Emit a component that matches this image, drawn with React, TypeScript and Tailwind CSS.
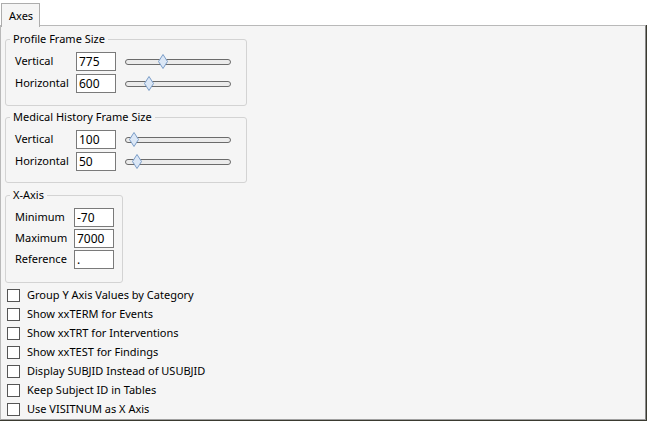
import React from "react";

const font = { fontFamily: '"Noto Sans", "Open Sans", Arial, sans-serif' };

function Slider({ pos }: { pos: number }) {
  return (
    <div className="relative w-[106px] h-[19px] flex items-center">
      <div className="w-full h-[6px] rounded-full border border-[#6b6b6b] bg-[#ebebeb]" />
      <svg
        className="absolute top-[2px]"
        style={{ left: pos - 5 }}
        width="10"
        height="15"
        viewBox="0 0 10 15"
      >
        <polygon points="5,0.5 9.5,7.5 5,14.5 0.5,7.5" fill="#dbe7f6" stroke="#7b9cc7" strokeWidth="1" />
      </svg>
    </div>
  );
}

function Input({ value }: { value: string }) {
  return (
    <div className="w-[40px] h-[19px] border border-[#7a7a7a] bg-white flex items-center pl-[2px] text-[12px] text-black leading-none">
      {value}
    </div>
  );
}

function SliderRow({ label, value, pos }: { label: string; value: string; pos: number }) {
  return (
    <div className="flex items-center h-[19px]">
      <div className="w-[61px] text-[11px] text-black">{label}</div>
      <Input value={value} />
      <div className="ml-[9px]">
        <Slider pos={pos} />
      </div>
    </div>
  );
}

function Group({ title, children, w, pb, gap }: { title: string; children: React.ReactNode; w: string; pb: string; gap: string }) {
  return (
    <fieldset className={`${w} border border-[#d3d3d3] rounded-[3px]`}>
      <legend className="ml-[4px] px-[3px] text-[11px] leading-[16px] text-black">{title}</legend>
      <div className={`pl-[9px] pt-[5px] ${pb} flex flex-col ${gap}`}>{children}</div>
    </fieldset>
  );
}

function Check({ label }: { label: string }) {
  return (
    <div className="flex items-center h-[19px]">
      <div className="w-[13px] h-[13px] border border-[#555] bg-white" />
      <span className="ml-[7px] text-[11px] text-black">{label}</span>
    </div>
  );
}

export default function App() {
  return (
    <div className="w-[647px] h-[422px] bg-white flex flex-col" style={font}>
      <div className="h-[26px] pt-[3px] pl-[1px] flex">
        <div className="relative z-10 w-[39px] h-[24px] border border-b-0 border-[#adadad] bg-[#f5f5f5] pl-[7px] pt-[4px] text-[11px] leading-[16px] text-black">
          Axes
        </div>
      </div>
      <div className="w-[647px] h-[396px] bg-[#3a3a30] -mt-px">
        <div className="w-[646px] h-[395px] bg-[#f5f5f5] border-t border-l border-[#b9b9b9] border-r border-r-[#8a8a8a] border-b border-b-[#a0a0a0] pl-[4px] pt-[5px] flex flex-col">
          <Group title="Profile Frame Size" w="w-[242px]" pb="pb-[12px]" gap="gap-[3px]">
            <SliderRow label="Vertical" value="775" pos={38} />
            <SliderRow label="Horizontal" value="600" pos={24} />
          </Group>
          <div className="h-[3px]" />
          <Group title="Medical History Frame Size" w="w-[242px]" pb="pb-[11px]" gap="gap-[3px]">
            <SliderRow label="Vertical" value="100" pos={9} />
            <SliderRow label="Horizontal" value="50" pos={12} />
          </Group>
          <div className="h-[4px]" />
          <Group title="X-Axis" w="w-[118px]" pb="pb-[13px]" gap="gap-[2px]">
            {[
              ["Minimum", "-70"],
              ["Maximum", "7000"],
              ["Reference", "."],
            ].map(([l, v]) => (
              <div key={l} className="flex items-center h-[19px]">
                <div className="w-[59px] text-[11px] text-black">{l}</div>
                <Input value={v} />
              </div>
            ))}
          </Group>
          <div className="mt-[3px] pl-[2px] flex flex-col">
            <Check label="Group Y Axis Values by Category" />
            <Check label="Show xxTERM for Events" />
            <Check label="Show xxTRT for Interventions" />
            <Check label="Show xxTEST for Findings" />
            <Check label="Display SUBJID Instead of USUBJID" />
            <Check label="Keep Subject ID in Tables" />
            <Check label="Use VISITNUM as X Axis" />
          </div>
        </div>
      </div>
    </div>
  );
}
